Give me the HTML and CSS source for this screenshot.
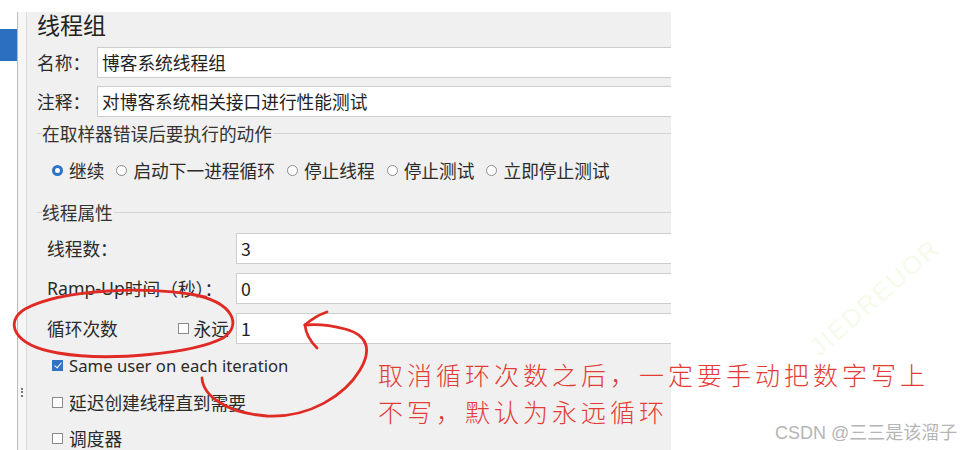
FILE: index.html
```html
<!DOCTYPE html>
<html lang="zh-CN">
<head>
  <meta charset="UTF-8">
  <title>线程组</title>
  <link rel="stylesheet" href="styles.css">
</head>
<body>
  <div class="screen">
    <div class="tree"><div class="tree-sel"></div></div>
    <div class="splitter"><span class="grip"></span></div>
    <div class="panel">
      <div class="title">线程组</div>
      <div class="field-row first">
        <span class="field-label">名称：</span>
        <div class="input">博客系统线程组</div>
      </div>
      <div class="field-row">
        <span class="field-label">注释：</span>
        <div class="input">对博客系统相关接口进行性能测试</div>
      </div>

      <div class="group error-group">
        <div class="legend"><span>在取样器错误后要执行的动作</span></div>
        <div class="radios">
          <span class="radio on"><i></i>继续</span>
          <span class="radio"><i></i>启动下一进程循环</span>
          <span class="radio"><i></i>停止线程</span>
          <span class="radio"><i></i>停止测试</span>
          <span class="radio"><i></i>立即停止测试</span>
        </div>
      </div>

      <div class="group props-group">
        <div class="legend"><span>线程属性</span></div>
        <div class="prop-row first">
          <span class="prop-label">线程数：</span>
          <div class="input">3</div>
        </div>
        <div class="prop-row">
          <span class="prop-label"><span class="latin">Ramp-Up</span>时间（秒）：</span>
          <div class="input">0</div>
        </div>
        <div class="prop-row">
          <span class="prop-label">循环次数<span class="forever"><i class="box"></i>永远</span></span>
          <div class="input">1</div>
        </div>
        <div class="check-row same-user"><i class="box checked"></i><span class="latin">Same user on each iteration</span></div>
        <div class="check-row delay"><i class="box"></i>延迟创建线程直到需要</div>
        <div class="check-row sched"><i class="box"></i>调度器</div>
      </div>
    </div>
  </div>

  <!-- hand drawn marks on top of the screenshot -->
  <svg class="marks" width="962" height="450" viewBox="0 0 962 450">
    <path d="M 206 297 C 150 285, 62 289, 25 309 C 5 321, 11 345, 58 353 C 110 362, 194 353, 223 338 C 242 326, 235 302, 190 294" />
    <path d="M 202 378 C 203 395, 225 413, 267 416 C 310 418, 345 395, 360 370 C 372 350, 368 335, 345 329 C 330 325, 315 324, 305 325" />
    <path d="M 305 325 Q 315 316, 327 312" />
    <path d="M 305 325 Q 306 337, 317 348" />
  </svg>
  <div class="note">取消循环次数之后，一定要手动把数字写上<br>不写，默认为永远循环</div>
  <div class="stamp">JIEDREUOR</div>
  <div class="credit">CSDN @三三是该溜子</div>
</body>
</html>
```

FILE: styles.css
```css
body {
  margin: 0;
  background: #fff;
  font-family: "Noto Sans CJK SC", "Noto Sans", sans-serif;
  color: #2b2b2b;
  overflow: hidden;
}
.screen {
  display: flex;
  height: 450px;
  padding-top: 12px;
  box-sizing: border-box;
}
.tree {
  width: 17px;
}
.tree-sel {
  margin-top: 17px;
  height: 32px;
  background: #2a6fc0;
}
.splitter {
  width: 8px;
  border-left: 1px solid #b9b9b9;
  background: #f6f6f6;
}
.grip {
  display: block;
  margin: 376px 0 0 3px;
  width: 0;
  height: 9px;
  border-left: 2px dotted #777;
}
.panel {
  width: 634px;
  padding-left: 10px;
  background: #f0f0f0;
  border-left: 1px solid #dcdcdc;
  overflow-x: clip;
  overflow-y: visible;
}
.title {
  margin-top: -4px;
  font-size: 23px;
  line-height: 33px;
  color: #222;
}
.field-row {
  display: flex;
  margin-top: 8px;
  font-size: 17.7px;
}
.field-row.first {
  margin-top: 6px;
}
.field-label {
  width: 60px;
  flex: none;
  line-height: 31px;
}
.input {
  flex: 1;
  height: 31px;
  box-sizing: border-box;
  margin-right: -30px;
  padding-left: 4px;
  background: #fff;
  border: 1px solid #cdcdcd;
  font-size: 17.7px;
  line-height: 29px;
  color: #222;
  white-space: nowrap;
}
.group {
  font-size: 17.7px;
}
.error-group {
  margin-top: 6px;
}
.props-group {
  margin-top: 21px;
}
.legend {
  display: flex;
  align-items: center;
  height: 20px;
  line-height: 20px;
  color: #333;
}
.legend::before {
  content: "";
  width: 5px;
  border-top: 1px solid #d3d3d3;
}
.legend::after {
  content: "";
  flex: 1;
  border-top: 1px solid #d3d3d3;
  margin-left: 1px;
}
.radios {
  display: flex;
  gap: 12px;
  margin-top: 16px;
  padding-left: 15px;
  line-height: 22px;
}
.radio {
  display: flex;
  align-items: center;
}
.radio i {
  width: 11px;
  height: 11px;
  box-sizing: border-box;
  border: 1px solid #8c8c8c;
  border-radius: 50%;
  background: #fff;
  margin-right: 6px;
}
.radio.on i {
  border: 3.5px solid #2f72c6;
}
.prop-row {
  display: flex;
  margin-top: 9px;
  padding-left: 10px;
}
.prop-row.first {
  margin-top: 11px;
}
.prop-label {
  display: flex;
  width: 189px;
  flex: none;
  line-height: 31px;
}
.latin {
  font-family: "Noto Sans", "Noto Sans CJK SC", sans-serif;
}
.forever {
  display: flex;
  align-items: center;
  margin: 0 7px 0 auto;
}
.box {
  display: inline-block;
  flex: none;
  width: 11px;
  height: 11px;
  box-sizing: border-box;
  border: 1px solid #8a8a8a;
  background: #fff;
  margin-right: 6px;
  position: relative;
}
.forever .box {
  margin-right: 5px;
}
.box.checked {
  background: #2f72c6;
  border-color: #2f72c6;
}
.box.checked::after {
  content: "";
  position: absolute;
  left: 3px;
  top: 0;
  width: 3px;
  height: 6px;
  border: solid #fff;
  border-width: 0 1.5px 1.5px 0;
  transform: rotate(40deg);
}
.check-row {
  display: flex;
  align-items: center;
  height: 22px;
  padding-left: 15px;
}
.same-user {
  margin-top: 10px;
  font-size: 16.7px;
}
.delay {
  margin-top: 15px;
}
.sched {
  margin-top: 14px;
}
.marks {
  position: absolute;
  left: 0;
  top: 0;
  fill: none;
  stroke: #e02b25;
  stroke-width: 2.8;
  stroke-linecap: round;
  stroke-linejoin: round;
  pointer-events: none;
}
.note {
  position: absolute;
  left: 378px;
  top: 356px;
  font-size: 25px;
  font-weight: 300;
  letter-spacing: 4px;
  line-height: 37px;
  color: #e23c35;
  white-space: nowrap;
}
.stamp {
  position: absolute;
  left: 780px;
  top: 283px;
  width: 190px;
  text-align: center;
  font-family: "Liberation Sans", sans-serif;
  font-size: 25px;
  letter-spacing: 2px;
  color: #f5fbea;
  transform: rotate(-41deg);
}
.credit {
  position: absolute;
  left: 775px;
  top: 421px;
  font-family: "Liberation Sans", "Noto Sans CJK SC", sans-serif;
  font-size: 18px;
  line-height: 24px;
  color: #b5b5b5;
  white-space: nowrap;
}
```
